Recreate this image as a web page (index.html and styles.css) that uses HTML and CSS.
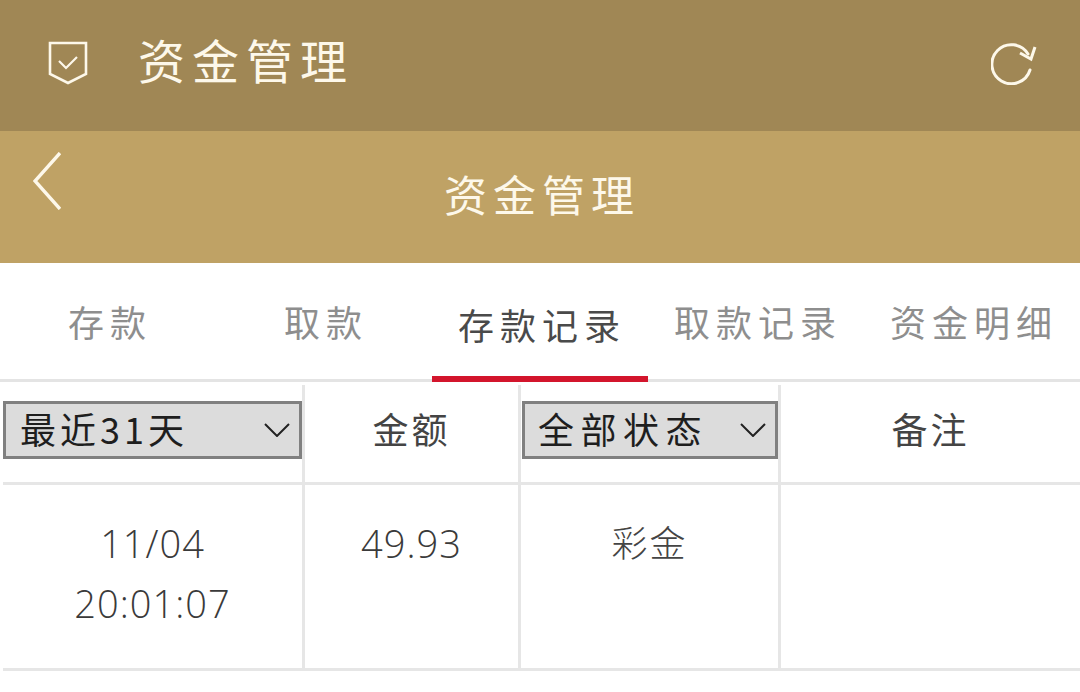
FILE: index.html
```html
<!DOCTYPE html>
<html lang="zh-CN">

<head>
    <meta charset="UTF-8">
    <title>资金管理</title>
    <link rel="stylesheet" href="styles.css">
</head>

<body>
    <!-- App bar -->
    <header class="app-bar">
        <svg class="shield-icon" viewBox="0 0 40 44" fill="none" stroke="#fdf8ea" stroke-width="2.6">
            <path d="M2 2H38V33L20 42L2 33Z" />
            <path d="M11 20L18 27L29 16" stroke-width="2.2" />
        </svg>
        <h1 class="app-title">资金管理</h1>
        <svg class="refresh-icon" viewBox="0 0 46 44" fill="none" stroke="#fdf8ea" stroke-width="3" stroke-linecap="round">
            <path d="M39 29A19.5 19.5 0 1 1 37 13" />
            <path d="M29 12L40 18L44 6" stroke-linecap="butt" />
        </svg>
    </header>

    <!-- Page title -->
    <div class="page-bar">
        <svg class="back-icon" viewBox="0 0 28 58" fill="none" stroke="#fdf8ea" stroke-width="3.4">
            <path d="M27 1L2 29L27 57" />
        </svg>
        <h2 class="page-title">资金管理</h2>
    </div>

    <!-- Tabs -->
    <nav class="tabs">
        <a class="tab">存款</a>
        <a class="tab">取款</a>
        <a class="tab active">存款记录</a>
        <a class="tab">取款记录</a>
        <a class="tab">资金明细</a>
    </nav>

    <!-- Records -->
    <section class="records">
        <div class="cell head first">
            <div class="select">
                <span class="select-text">最近31天</span>
                <svg class="select-arrow" viewBox="0 0 26 14" fill="none" stroke="#222" stroke-width="2">
                    <path d="M1 1L13 13L25 1" />
                </svg>
            </div>
        </div>
        <div class="cell head label">金额</div>
        <div class="cell head narrow">
            <div class="select">
                <span class="select-text wide">全部状态</span>
                <svg class="select-arrow" viewBox="0 0 26 14" fill="none" stroke="#222" stroke-width="2">
                    <path d="M1 1L13 13L25 1" />
                </svg>
            </div>
        </div>
        <div class="cell head label last">备注</div>

        <div class="cell row number first">11/04<br>20:01:07</div>
        <div class="cell row number">49.93</div>
        <div class="cell row">彩金</div>
        <div class="cell row last"></div>
    </section>
</body>

</html>
```

FILE: styles.css
```css
/* General Styles */
body {
    margin: 0;
    height: 692px;
    overflow: hidden;
    background-color: #ffffff;
    color: #444444;
    font-family: "Noto Sans CJK SC", "Noto Sans", sans-serif;
}

h1,
h2 {
    margin: 0;
    font-weight: 400;
}

/* App bar */
.app-bar {
    height: 131px;
    display: flex;
    align-items: center;
    padding: 0 43px 6px 48px;
    box-sizing: border-box;
    background-color: #a08755;
}

.shield-icon {
    width: 40px;
    height: 44px;
}

.app-title {
    flex: 1;
    margin-left: 50px;
    padding-bottom: 8px;
    font-size: 47px;
    line-height: 60px;
    letter-spacing: 7px;
    color: #fdf8ea;
}

.refresh-icon {
    width: 46px;
    height: 44px;
}

/* Page title bar */
.page-bar {
    position: relative;
    height: 132px;
    display: flex;
    align-items: center;
    justify-content: center;
    background-color: #bfa265;
}

.back-icon {
    position: absolute;
    left: 33px;
    top: 21px;
    width: 28px;
    height: 58px;
}

.page-title {
    padding: 0 0 9px 4px;
    font-size: 43px;
    line-height: 60px;
    letter-spacing: 6px;
    color: #fdf8ea;
}

/* Tabs */
.tabs {
    height: 119px;
    display: flex;
    border-bottom: 3px solid #e4e4e4;
    box-sizing: border-box;
}

.tab {
    flex: 1;
    height: 119px;
    box-sizing: border-box;
    padding: 34px 0 0 4px;
    text-align: center;
    font-size: 36px;
    line-height: 48px;
    letter-spacing: 6px;
    color: #8e8e8e;
}

.tab.active {
    padding-top: 37px;
    color: #4a4a4a;
    border-bottom: 6px solid #d3152c;
}

/* Records table */
.records {
    display: grid;
    grid-template-columns: 305px 216px 260px 1fr;
    grid-template-rows: 100px 186px;
    padding-top: 3px;
}

.cell {
    box-sizing: border-box;
    border-right: 3px solid #e6e6e6;
    border-bottom: 3px solid #e6e6e6;
    text-align: center;
    font-size: 36px;
}

.cell.first {
    margin-left: 3px;
}

.cell.last {
    border-right: none;
}

.head {
    display: flex;
    align-items: center;
    justify-content: center;
    letter-spacing: 3px;
    padding-bottom: 7px;
}

.head.label {
    padding-bottom: 11px;
}

.row {
    padding-top: 26px;
    line-height: 60px;
    letter-spacing: 2px;
    font-weight: 300;
}

.row.number {
    padding-top: 28px;
    font-family: "Open Sans", sans-serif;
    font-size: 38px;
    letter-spacing: 1px;
    color: #3a3a3a;
}

/* Native looking select */
.select {
    flex: 1;
    height: 58px;
    display: flex;
    align-items: center;
    justify-content: space-between;
    box-sizing: border-box;
    padding: 0 9px 0 14px;
    border: 3px solid #808080;
    background-color: #dcdcdc;
    color: #1e1e1e;
    font-size: 36px;
    letter-spacing: 4px;
}

.select-text {
    padding-bottom: 4px;
}

.select-text.wide {
    margin-left: -1px;
    letter-spacing: 6.5px;
}

.cell.narrow {
    padding-left: 1px;
}

.select-arrow {
    width: 26px;
    height: 14px;
}
```
